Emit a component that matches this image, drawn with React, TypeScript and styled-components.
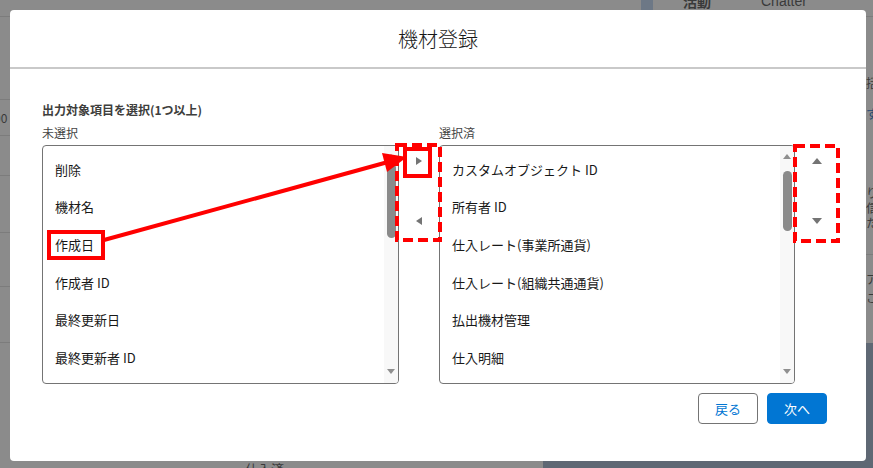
import React from 'react';
import styled, { createGlobalStyle } from 'styled-components';

const GlobalStyle = createGlobalStyle`
  html, body {
    margin: 0;
    padding: 0;
  }
  body {
    font-family: "Noto Sans CJK JP", "Noto Sans", sans-serif;
    color: #181818;
  }
`;

const Page = styled.div`
  position: relative;
  width: 873px;
  height: 468px;
  overflow: hidden;
  background: #8b8b8b;
  display: grid;
  grid-template-columns: 543px 98px 12px 1fr;
  grid-template-rows: 343px 1fr;
`;

// ---- dimmed page behind the modal ----

const LeftPane = styled.div`
  grid-column: 1 / 3;
  grid-row: 1;
  display: flex;
  flex-direction: column;
`;

const BgRow = styled.div<{ $h: number }>`
  height: ${({ $h }) => $h}px;
  border-bottom: 1px solid #7c7c7c;
  display: flex;
  align-items: center;
  font-size: 12px;
  color: #3a3a3a;
`;

const CutText = styled.span`
  margin-left: -6px;
  color: #3a3a3a;
`;

const LeftBottom = styled.div`
  grid-column: 1;
  grid-row: 2;
  padding: 116px 0 0 245px;
  font-size: 13px;
  color: #3a3a3a;
`;

const Dock = styled.div`
  grid-column: 2 / 5;
  grid-row: 2;
  background: #5f6874;
`;

const BgScroll = styled.div`
  grid-column: 3;
  grid-row: 1;
  background: #6d7886;
`;

const RightPane = styled.div`
  grid-column: 4;
  grid-row: 1;
  display: flex;
  flex-direction: column;
`;

const Tabs = styled.div`
  height: 16px;
  border-bottom: 1px solid #7c7c7c;
  display: flex;
  align-items: flex-start;
  gap: 50px;
  padding-left: 30px;
  font-size: 14px;
  line-height: 14px;
  color: #3a3a3a;
  overflow: hidden;
`;

const Tab = styled.span<{ $active?: boolean }>`
  margin-top: -6px;
  font-weight: ${({ $active }) => ($active ? 700 : 400)};
  font-family: ${({ $active }) => ($active ? '"Noto Sans CJK JP", sans-serif' : '"Liberation Sans", sans-serif')};
`;

const SideText = styled.div<{ $link?: boolean; $top: number }>`
  padding-left: 213px;
  margin-top: ${({ $top }) => $top}px;
  font-size: 12px;
  line-height: 15px;
  white-space: nowrap;
  color: ${({ $link }) => ($link ? '#1d4670' : '#3a3a3a')};
`;

const SideRule = styled.div<{ $top: number }>`
  margin-top: ${({ $top }) => $top}px;
  border-top: 1px solid #7c7c7c;
`;

// ---- modal ----

const Modal = styled.section`
  position: absolute;
  left: 10px;
  top: 10px;
  width: 856px;
  height: 451px;
  background: #fff;
  border-radius: 4px;
  display: flex;
  flex-direction: column;
`;

const Header = styled.header`
  height: 57px;
  border-bottom: 2px solid #c9c9c9;
  display: flex;
  align-items: center;
  justify-content: center;
  font-size: 20px;
  font-weight: 300;
  color: #181818;
`;

const Body = styled.div`
  padding: 32px 28px 0 32px;
`;

const Legend = styled.div`
  font-size: 12px;
  line-height: 18px;
  font-weight: 700;
  color: #3e3e3c;
`;

const DualList = styled.div`
  margin-top: 5px;
  display: grid;
  grid-template-columns: 357px 40px 356px 43px;
  grid-template-rows: 18px 239px;
  row-gap: 3px;
`;

const ListLabel = styled.div<{ $col: number }>`
  grid-column: ${({ $col }) => $col};
  grid-row: 1;
  font-size: 12px;
  line-height: 18px;
  color: #444;
`;

const Listbox = styled.div<{ $col: number }>`
  grid-column: ${({ $col }) => $col};
  grid-row: 2;
  border: 1px solid #747474;
  border-radius: 4px;
  display: grid;
  grid-template-columns: 1fr 14px;
  overflow: hidden;
`;

const Options = styled.ul`
  list-style: none;
  margin: 0;
  padding: 4.5px 0 0;
`;

const Option = styled.li`
  height: 37.6px;
  display: flex;
  align-items: center;
  padding-left: 12px;
  font-size: 13px;
  color: #181818;
  white-space: nowrap;
`;

const ScrollTrack = styled.div`
  background: #f8f8f8;
  display: flex;
  flex-direction: column;
  align-items: center;
  padding: 8px 0 9px;
`;

const Thumb = styled.div<{ $top: number; $h: number }>`
  width: 9px;
  margin-top: ${({ $top }) => $top}px;
  height: ${({ $h }) => $h}px;
  border-radius: 4.5px;
  background: #8a8a8a;
`;

const Spacer = styled.div`
  flex: 1;
`;

type Dir = 'up' | 'down' | 'left' | 'right';

const Tri = styled.span<{ $dir: Dir; $color?: string; $w?: number; $h?: number }>`
  display: block;
  width: 0;
  height: 0;
  ${({ $dir, $color = '#747474', $w = 10, $h = 5 }) => {
    // $w: base of the triangle, $h: its height
    const half = $w / 2;
    if ($dir === 'up') return `border-left:${half}px solid transparent;border-right:${half}px solid transparent;border-bottom:${$h}px solid ${$color};`;
    if ($dir === 'down') return `border-left:${half}px solid transparent;border-right:${half}px solid transparent;border-top:${$h}px solid ${$color};`;
    if ($dir === 'left') return `border-top:${half}px solid transparent;border-bottom:${half}px solid transparent;border-right:${$h}px solid ${$color};`;
    return `border-top:${half}px solid transparent;border-bottom:${half}px solid transparent;border-left:${$h}px solid ${$color};`;
  }}
`;

const ButtonStack = styled.div<{ $col: number }>`
  grid-column: ${({ $col }) => $col};
  grid-row: 2;
  display: flex;
  flex-direction: column;
  align-items: center;
  gap: 28px;
`;

const IconButton = styled.button`
  width: 28px;
  height: 32px;
  padding: 0;
  border: none;
  background: transparent;
  display: flex;
  align-items: center;
  justify-content: center;
`;

const Footer = styled.div`
  margin-top: 9px;
  padding-right: 11px;
  display: flex;
  justify-content: flex-end;
  gap: 9px;
`;

const Button = styled.button<{ $brand?: boolean }>`
  height: 31px;
  padding: 0 16px;
  border-radius: 4px;
  font-family: inherit;
  font-size: 13px;
  border: 1px solid ${({ $brand }) => ($brand ? '#0176d3' : '#747474')};
  background: ${({ $brand }) => ($brand ? '#0176d3' : '#fff')};
  color: ${({ $brand }) => ($brand ? '#fff' : '#0176d3')};
`;

const Marks = styled.svg`
  position: absolute;
  left: 0;
  top: 0;
  pointer-events: none;
`;

const available = ['削除', '機材名', '作成日', '作成者 ID', '最終更新日', '最終更新者 ID'];
const selected = [
  'カスタムオブジェクト ID',
  '所有者 ID',
  '仕入レート(事業所通貨)',
  '仕入レート(組織共通通貨)',
  '払出機材管理',
  '仕入明細',
];

const ScrollBar: React.FC<{ top: number; h: number }> = ({ top, h }) => (
  <ScrollTrack>
    <Tri $dir="up" $color="#8f8f8f" $w={9} $h={5} />
    <Thumb $top={top} $h={h} />
    <Spacer />
    <Tri $dir="down" $color="#8f8f8f" $w={9} $h={5} />
  </ScrollTrack>
);

const App: React.FC = () => (
  <>
    <GlobalStyle />
    <Page>
      <LeftPane>
        <BgRow $h={16} />
        <BgRow $h={84} />
        <BgRow $h={35}>
          <CutText>00</CutText>
        </BgRow>
        <BgRow $h={40} />
        <BgRow $h={57} />
        <BgRow $h={54} />
        <BgRow $h={56} />
      </LeftPane>
      <BgScroll />
      <RightPane>
        <Tabs>
          <Tab $active>活動</Tab>
          <Tab>Chatter</Tab>
        </Tabs>
        <SideText $top={58}>括</SideText>
        <SideText $top={16} $link>す</SideText>
        <SideText $top={64}>り</SideText>
        <SideText $top={0}>信</SideText>
        <SideText $top={0}>た</SideText>
        <SideRule $top={24} />
        <SideText $top={16}>ア</SideText>
        <SideText $top={4}>こ</SideText>
      </RightPane>
      <LeftBottom>仕入済</LeftBottom>
      <Dock />

      <Modal>
        <Header>機材登録</Header>
        <Body>
          <Legend>出力対象項目を選択(1つ以上)</Legend>
          <DualList>
            <ListLabel $col={1}>未選択</ListLabel>
            <ListLabel $col={3}>選択済</ListLabel>
            <Listbox $col={1}>
              <Options>
                {available.map((o) => (
                  <Option key={o}>{o}</Option>
                ))}
              </Options>
              <ScrollBar top={4} h={75} />
            </Listbox>
            <ButtonStack $col={2}>
              <IconButton aria-label="選択済に移動">
                <Tri $dir="right" $w={9} $h={6} />
              </IconButton>
              <IconButton aria-label="未選択に移動">
                <Tri $dir="left" $w={9} $h={6} />
              </IconButton>
            </ButtonStack>
            <Listbox $col={3}>
              <Options>
                {selected.map((o) => (
                  <Option key={o}>{o}</Option>
                ))}
              </Options>
              <ScrollBar top={12} h={60} />
            </Listbox>
            <ButtonStack $col={4}>
              <IconButton aria-label="上へ移動">
                <Tri $dir="up" $w={10} $h={6} />
              </IconButton>
              <IconButton aria-label="下へ移動">
                <Tri $dir="down" $w={10} $h={6} />
              </IconButton>
            </ButtonStack>
          </DualList>
          <Footer>
            <Button>戻る</Button>
            <Button $brand>次へ</Button>
          </Footer>
        </Body>
      </Modal>

      <Marks width="873" height="468" viewBox="0 0 873 468">
        <g fill="none" stroke="#ff0000" strokeWidth="4">
          <rect x="49" y="232" width="54" height="26" />
          <rect x="405" y="149" width="25" height="27" />
          <rect x="397" y="145" width="43" height="95" strokeDasharray="10 5" />
          <rect x="795" y="146" width="43" height="95" strokeDasharray="10 5" />
          <line x1="104" y1="240" x2="388" y2="162" />
        </g>
        <polygon points="407,157 387,172 382,153" fill="#ff0000" />
      </Marks>
    </Page>
  </>
);

export default App;
